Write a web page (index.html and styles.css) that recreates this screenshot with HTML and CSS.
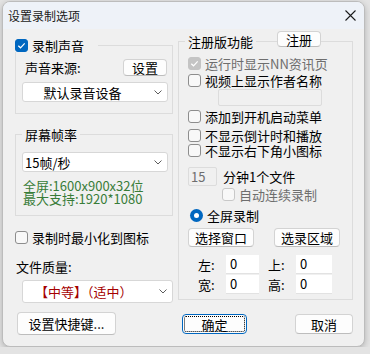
FILE: index.html
```html
<!DOCTYPE html>
<html lang="zh-CN">
<head>
    <meta charset="UTF-8">
    <meta name="viewport" content="width=device-width, initial-scale=1.0">
    <title>设置录制选项</title>
    <link rel="stylesheet" href="styles.css">
</head>
<body>
    <div class="window">
        <div class="titlebar">
            <span class="title">设置录制选项</span>
            <svg class="close" width="11" height="11" viewBox="0 0 11 11"><path d="M0.5 0.5L10.5 10.5M10.5 0.5L0.5 10.5" stroke="#1b1b1b" stroke-width="1.1" fill="none"/></svg>
        </div>

        <div class="content">
            <div class="col-left">
                <fieldset class="group group-audio">
                    <legend class="legend-check">
                        <span class="check on"><svg width="9" height="9" viewBox="0 0 9 9"><path d="M1.3 4.7L3.5 6.8L7.7 2.3" stroke="#fff" stroke-width="1.2" fill="none"/></svg></span>
                        <span>录制声音</span>
                    </legend>
                    <div class="source-row">
                        <span class="source-label">声音来源:</span>
                        <button class="btn btn-set">设置</button>
                    </div>
                    <div class="combo combo-device">
                        <span class="combo-value">默认录音设备</span>
                        <svg class="chevron" width="8" height="5" viewBox="0 0 8 5"><path d="M0.5 0.5L4 4L7.5 0.5" stroke="#5c5c5c" stroke-width="1" fill="none"/></svg>
                    </div>
                </fieldset>

                <fieldset class="group group-fps">
                    <legend>屏幕帧率</legend>
                    <div class="combo combo-fps">
                        <span class="combo-value">15帧/秒</span>
                        <svg class="chevron" width="8" height="5" viewBox="0 0 8 5"><path d="M0.5 0.5L4 4L7.5 0.5" stroke="#5c5c5c" stroke-width="1" fill="none"/></svg>
                    </div>
                    <div class="screen-info">
                        <p>全屏:1600x900x32位</p>
                        <p>最大支持:1920*1080</p>
                    </div>
                </fieldset>

                <div class="check-row minimize-row">
                    <span class="check"></span>
                    <span>录制时最小化到图标</span>
                </div>

                <div class="quality-label">文件质量:</div>
                <div class="combo combo-quality">
                    <span class="combo-value">【中等】（适中）</span>
                    <svg class="chevron" width="8" height="5" viewBox="0 0 8 5"><path d="M0.5 0.5L4 4L7.5 0.5" stroke="#5c5c5c" stroke-width="1" fill="none"/></svg>
                </div>

                <button class="btn btn-hotkey">设置快捷键...</button>
            </div>

            <div class="col-right">
                <fieldset class="group group-pro">
                    <legend class="legend-pro">
                        注册版功能
                        <button class="btn btn-register">注册</button>
                    </legend>

                    <div class="check-row row-1 disabled">
                        <span class="check dis-on"><svg width="9" height="9" viewBox="0 0 9 9"><path d="M1.3 4.7L3.5 6.8L7.7 2.3" stroke="#fff" stroke-width="1.2" fill="none"/></svg></span>
                        <span>运行时显示NN资讯页</span>
                    </div>
                    <div class="check-row row-2">
                        <span class="check"></span>
                        <span>视频上显示作者名称</span>
                    </div>
                    <div class="field field-author"></div>
                    <div class="check-row row-3">
                        <span class="check"></span>
                        <span>添加到开机启动菜单</span>
                    </div>
                    <div class="check-row row-4">
                        <span class="check"></span>
                        <span>不显示倒计时和播放</span>
                    </div>
                    <div class="check-row row-5">
                        <span class="check"></span>
                        <span>不显示右下角小图标</span>
                    </div>

                    <div class="split-row">
                        <div class="field field-minutes">15</div>
                        <span class="split-label">分钟1个文件</span>
                    </div>
                    <div class="check-row auto-row disabled">
                        <span class="check dis"></span>
                        <span>自动连续录制</span>
                    </div>

                    <div class="check-row radio-row">
                        <span class="radio"></span>
                        <span>全屏录制</span>
                    </div>

                    <div class="area-buttons">
                        <button class="btn btn-area">选择窗口</button>
                        <button class="btn btn-area">选录区域</button>
                    </div>

                    <div class="coords">
                        <span class="coord-label">左:</span>
                        <div class="coord coord-a">0</div>
                        <span class="coord-label coord-label-b">上:</span>
                        <div class="coord coord-b">0</div>
                        <span class="coord-label">宽:</span>
                        <div class="coord coord-a">0</div>
                        <span class="coord-label coord-label-b">高:</span>
                        <div class="coord coord-b">0</div>
                    </div>
                </fieldset>

                <div class="dialog-buttons">
                    <button class="btn btn-ok">确定</button>
                    <button class="btn btn-cancel">取消</button>
                </div>
            </div>
        </div>
    </div>
</body>
</html>
```

FILE: styles.css
```css
body {
    margin: 0;
    background-color: #e3e3e3;
    font-family: "Noto Sans CJK SC", "Noto Sans", sans-serif;
    font-size: 13px;
    color: #000;
}

.window {
    margin: 1px 0 0 2px;
    width: 363px;
    height: 346px;
    box-sizing: border-box;
    border: 1px solid #bcbcbc;
    border-radius: 8px;
    background-color: #f0f0f0;
    overflow: hidden;
    box-shadow: 0 2px 6px rgba(0, 0, 0, 0.22);
}

.titlebar {
    height: 27px;
    display: flex;
    align-items: center;
    justify-content: space-between;
    padding: 0 8px 0 5px;
    background-color: #eef2f8;
}

.title {
    font-size: 12px;
    line-height: 12px;
    color: #1a1a1a;
}

.content {
    display: flex;
    align-items: flex-start;
    gap: 5px;
    padding-left: 12px;
}

/* group boxes */
.group {
    margin: 0;
    min-width: 0;
    border: 1px solid #dcdcdc;
    padding: 0 4px 0 6px;
    box-sizing: border-box;
}

.group legend {
    padding: 0 3px;
    height: 13px;
    line-height: 13px;
}

.col-left {
    width: 158px;
    margin-top: 10px;
    display: flex;
    flex-direction: column;
}

.col-right {
    width: 175px;
    margin-top: 6px;
    display: flex;
    flex-direction: column;
}

.group-audio {
    padding-top: 7px;
    padding-bottom: 11px;
}

.legend-check {
    display: flex;
    align-items: center;
    gap: 4px;
    margin-left: -7px;
    padding: 0 14px 0 0 !important;
}

.source-row {
    display: flex;
    align-items: center;
    justify-content: space-between;
    height: 17px;
}

.source-label {
    margin-left: 3px;
    line-height: 13px;
}

.btn {
    font-family: inherit;
    font-size: 13px;
    line-height: 13px;
    color: #000;
    padding: 0;
    box-sizing: border-box;
    background-color: #fdfdfd;
    border: 1px solid #d3d3d3;
    border-bottom-color: #bdbdbd;
    border-radius: 4px;
    display: flex;
    align-items: center;
    justify-content: center;
}

.btn-set {
    width: 44px;
    height: 17px;
    margin-right: 1px;
}

.combo {
    display: flex;
    align-items: center;
    box-sizing: border-box;
    height: 20px;
    background-color: #fff;
    border: 1px solid #d7d7d7;
    border-radius: 3px;
    padding: 0 5px 0 2px;
    line-height: 13px;
}

.combo-value {
    flex: 1;
}

.chevron {
    flex: none;
}

.combo-device {
    margin-top: 6px;
}

.combo-device .combo-value {
    text-align: center;
    padding-right: 14px;
}

.group-fps {
    margin-top: 14px;
    padding-top: 11px;
    padding-bottom: 10px;
}

.screen-info {
    margin-top: 7px;
    margin-left: 1px;
    color: #387c38;
}

.screen-info p {
    margin: 0;
    line-height: 13px;
}

.check-row {
    display: flex;
    align-items: center;
    gap: 4px;
    height: 13px;
    line-height: 13px;
}

.check {
    width: 13px;
    height: 13px;
    box-sizing: border-box;
    border: 1px solid #8d8d8d;
    border-radius: 3px;
    background-color: #f8f8f8;
    display: inline-flex;
    align-items: center;
    justify-content: center;
    flex: none;
}

.check.on {
    background-color: #0067c0;
    border-color: #0067c0;
}

.check.dis-on {
    background-color: #c4c4c4;
    border-color: #c4c4c4;
}

.check.dis {
    border-color: #c8c8c8;
}

.disabled {
    color: #6e6e6e;
}

.radio {
    width: 13px;
    height: 13px;
    border-radius: 50%;
    background-color: #0067c0;
    display: inline-flex;
    align-items: center;
    justify-content: center;
    flex: none;
}

.radio::after {
    content: "";
    width: 5px;
    height: 5px;
    border-radius: 50%;
    background-color: #fff;
}

.minimize-row {
    margin-top: 15px;
}

.quality-label {
    margin-top: 16px;
    margin-left: 1px;
    line-height: 13px;
}

.combo-quality {
    margin-top: 7px;
    margin-left: 7px;
    height: 23px;
    color: #a50000;
    padding-left: 12px;
}

.btn-hotkey {
    margin-top: 9px;
    margin-left: 2px;
    width: 99px;
    height: 23px;
}

/* right side */
.group-pro {
    padding: 9px 4px 5px 9px;
}

.legend-pro {
    position: relative;
    margin-left: -3px;
}

.btn-register {
    position: absolute;
    left: 92px;
    top: -4px;
    width: 44px;
    height: 16px;
}

.row-2 { margin-top: 4px; }
.row-3 { margin-top: 4px; }
.row-4 { margin-top: 6px; }
.row-5 { margin-top: 2px; }

.field {
    box-sizing: border-box;
    background-color: #f0f0f0;
    border: 1px solid #dcdcdc;
    border-radius: 2px;
    color: #6e6e6e;
    line-height: 13px;
}

.field-author {
    margin-top: 2px;
    margin-left: 30px;
    width: 104px;
    height: 17px;
}

.split-row {
    display: flex;
    align-items: center;
    margin-top: 10px;
    height: 19px;
}

.field-minutes {
    width: 29px;
    height: 19px;
    padding: 2px 0 0 2px;
}

.split-label {
    margin-left: 6px;
    line-height: 13px;
}

.auto-row {
    margin-top: 2px;
    margin-left: 34px;
}

.radio-row {
    margin-top: 8px;
    margin-left: 2px;
}

.area-buttons {
    display: flex;
    gap: 20px;
    margin-top: 6px;
}

.btn-area {
    width: 66px;
    height: 19px;
}

.coords {
    display: grid;
    grid-template-columns: 28px 33px 28px 36px;
    grid-auto-rows: 19px;
    row-gap: 1px;
    margin-top: 8px;
    margin-left: 10px;
    align-items: center;
}

.coord-label {
    line-height: 13px;
}

.coord-label-b {
    margin-left: 9px;
}

.coord {
    height: 19px;
    box-sizing: border-box;
    background-color: #fff;
    border-bottom: 1px solid #e2e2e2;
    padding: 2px 0 0 4px;
    line-height: 13px;
}

.coord-b {
    margin-left: 9px;
    width: 36px;
}

.dialog-buttons {
    display: flex;
    justify-content: space-between;
    margin-top: 14px;
}

.btn-ok {
    margin-left: 4px;
    width: 65px;
    height: 20px;
    border: 1px solid #0067c0;
    outline: 1px dotted #000;
    outline-offset: -3px;
}

.btn-cancel {
    width: 58px;
    height: 20px;
}
```
